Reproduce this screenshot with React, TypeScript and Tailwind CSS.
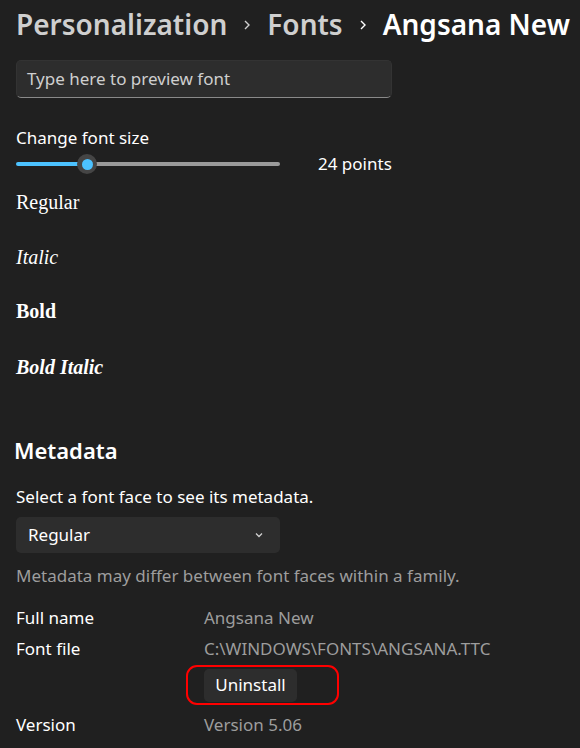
import React from "react";

export default function App() {
  const sans = { fontFamily: '"Noto Sans", "Open Sans", sans-serif' };
  return (
    <div className="w-[580px] h-[748px] bg-[#202020] text-white overflow-hidden" style={sans}>
      <div className="pl-[16px]">
        {/* breadcrumb */}
        <div className="h-[48px] flex items-center gap-[15px] text-[28px] font-semibold leading-none whitespace-nowrap">
          <span className="text-[#cfcfcf]">Personalization</span>
          <svg width="10" height="12" viewBox="0 0 10 12" className="mt-[2px]"><path d="M3 2 L7 6 L3 10" stroke="#cfcfcf" strokeWidth="1.4" fill="none" /></svg>
          <span className="text-[#cfcfcf]">Fonts</span>
          <svg width="10" height="12" viewBox="0 0 10 12" className="mt-[2px]"><path d="M3 2 L7 6 L3 10" stroke="#ffffff" strokeWidth="1.4" fill="none" /></svg>
          <span className="text-white">Angsana New</span>
        </div>
        {/* input */}
        <div className="mt-[12px] w-[376px] h-[38px] rounded-[5px] bg-[#2d2d2d] border border-[#333333] border-b-[#8a8a8a] flex items-center pl-[10px] text-[17px] text-[#cfcfcf]">
          Type here to preview font
        </div>
        <div className="mt-[28px] text-[17px] leading-[24px] text-white">Change font size</div>
        {/* slider */}
        <div className="mt-[3px] h-[22px] flex items-center">
          <div className="relative w-[264px] h-[22px] flex items-center">
            <div className="w-[71px] h-[4px] rounded-l-full bg-[#4cc2ff]" />
            <div className="flex-1 h-[4px] rounded-r-full bg-[#9a9a9a]" />
            <div className="absolute left-[61px] top-[1px] w-[20px] h-[20px] rounded-full bg-[#454545] flex items-center justify-center">
              <div className="w-[11px] h-[11px] rounded-full bg-[#4cc2ff]" />
            </div>
          </div>
          <div className="ml-[38px] text-[17px] text-white">24 points</div>
        </div>
        {/* font samples */}
        <div style={{ fontFamily: '"Liberation Serif", serif' }} className="text-[20px] text-white">
          <div className="mt-[15px] h-[24px] leading-[24px]">Regular</div>
          <div className="mt-[31px] h-[24px] leading-[24px] italic">Italic</div>
          <div className="mt-[30px] h-[24px] leading-[24px] font-bold">Bold</div>
          <div className="mt-[32px] h-[24px] leading-[24px] font-bold italic">Bold Italic</div>
        </div>
        <div className="mt-[56px] -ml-[2px] text-[22px] font-semibold leading-[30px]">Metadata</div>
        <div className="mt-[20px] text-[17px] leading-[24px]">Select a font face to see its metadata.</div>
        <div className="mt-[8px] w-[264px] h-[36px] rounded-[5px] bg-[#2d2d2d] flex items-center justify-between pl-[12px] pr-[16px] text-[17px]">
          <span>Regular</span>
          <svg width="10" height="8" viewBox="0 0 10 8"><path d="M2 2.5 L5 5.5 L8 2.5" stroke="#d0d0d0" strokeWidth="1.3" fill="none" /></svg>
        </div>
        <div className="mt-[11px] text-[17px] leading-[24px] text-[#9d9d9d]">Metadata may differ between font faces within a family.</div>
        {/* metadata rows */}
        <div className="mt-[18px] text-[17px] leading-[24px]">
          <div className="flex">
            <div className="w-[188px]">Full name</div>
            <div className="text-[#9d9d9d]">Angsana New</div>
          </div>
          <div className="flex mt-[7px]">
            <div className="w-[188px]">Font file</div>
            <div className="text-[#9d9d9d]">C:\WINDOWS\FONTS\ANGSANA.TTC</div>
          </div>
          <div className="flex mt-[4px]">
            <div className="w-[170px]" />
            <div className="relative w-[153px] h-[40px] rounded-[11px] border-[2.5px] border-[#ff0000] flex items-center pl-[16px]">
              <div className="h-[33px] w-[93px] rounded-[5px] bg-[#2d2d2d] flex items-center justify-center text-white">Uninstall</div>
            </div>
          </div>
          <div className="flex mt-[8px]">
            <div className="w-[188px]">Version</div>
            <div className="text-[#9d9d9d]">Version 5.06</div>
          </div>
        </div>
      </div>
    </div>
  );
}
